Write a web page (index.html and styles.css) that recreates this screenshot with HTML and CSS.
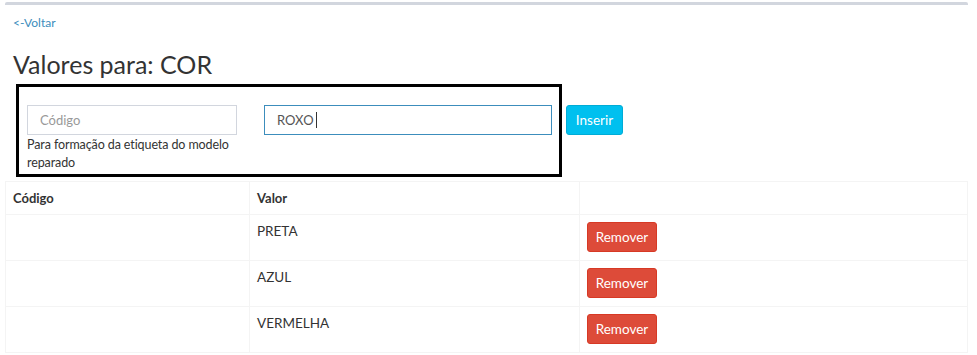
FILE: index.html
```html
<!DOCTYPE html>
<html lang="pt-BR">
<head>
    <meta charset="UTF-8">
    <title>Valores para: COR</title>
    <link rel="stylesheet" href="styles.css">
</head>
<body>
    <div class="box">
        <div class="box-body">
            <a href="#" class="back-link">&lt;-Voltar</a>
            <h2 class="page-title">Valores para: COR</h2>

            <div class="insert-row">
                <div class="insert-form">
                    <div class="field field-code">
                        <div class="form-control placeholder">Código</div>
                        <p class="help-text">Para formação da etiqueta do modelo reparado</p>
                    </div>
                    <div class="field field-value">
                        <div class="form-control focused">ROXO<span class="caret"></span></div>
                    </div>
                </div>
                <button class="btn btn-info">Inserir</button>
            </div>
        </div>

        <table class="values-table">
            <thead>
                <tr>
                    <th class="col-code">Código</th>
                    <th class="col-value">Valor</th>
                    <th></th>
                </tr>
            </thead>
            <tbody>
                <tr>
                    <td></td>
                    <td>PRETA</td>
                    <td><button class="btn btn-danger">Remover</button></td>
                </tr>
                <tr>
                    <td></td>
                    <td>AZUL</td>
                    <td><button class="btn btn-danger">Remover</button></td>
                </tr>
                <tr>
                    <td></td>
                    <td>VERMELHA</td>
                    <td><button class="btn btn-danger">Remover</button></td>
                </tr>
            </tbody>
        </table>
    </div>
</body>
</html>
```

FILE: styles.css
```css
body {
    font-family: Lato, "Noto Sans", sans-serif;
    font-size: 13px;
    color: #333;
    background-color: #fff;
    margin: 0;
    padding: 2px 9px 0 5px;
}

.box {
    border-top: 3px solid #d2d6de;
    border-radius: 2px 2px 0 0;
}

.box-body {
    padding: 11px 8px 4px 8px;
}

.back-link {
    display: block;
    font-size: 12px;
    color: #3c8dbc;
    text-decoration: none;
    line-height: 14px;
}

.page-title {
    font-size: 25px;
    font-weight: 400;
    color: #333;
    margin: 17px 0 3px 0;
    line-height: 34px;
}

.insert-row {
    display: flex;
    align-items: flex-start;
    gap: 4px;
}

.insert-form {
    display: flex;
    gap: 27px;
    width: 525px;
    margin-left: 3px;
    border: 3px solid #000;
    padding: 18px 7px 2px 8px;
}

.field-code {
    width: 210px;
}

.field-value {
    width: 288px;
}

.form-control {
    box-sizing: border-box;
    height: 30px;
    padding: 6px 12px;
    border: 1px solid #d2d6de;
    line-height: 16px;
    font-size: 13px;
    color: #555;
}

.form-control.placeholder {
    color: #999;
}

.form-control.focused {
    border-color: #3c8dbc;
}

.caret {
    display: inline-block;
    width: 1px;
    height: 16px;
    margin-left: 2px;
    vertical-align: top;
    background-color: #333;
}

.help-text {
    margin: 1px -20px 0 0;
    line-height: 18px;
    font-size: 12.5px;
    letter-spacing: -0.1px;
    color: #333;
}

.btn {
    font-family: inherit;
    font-size: 13.5px;
    height: 30px;
    padding: 0 12px;
    border-radius: 3px;
    color: #fff;
    cursor: pointer;
}

.btn-info {
    margin-top: 21px;
    width: 57px;
    background-color: #00c0ef;
    border: 1px solid #00acd6;
    padding: 0;
}

.btn-danger {
    display: block;
    width: 70px;
    padding: 0;
    background-color: #dd4b39;
    border: 1px solid #d73925;
}

.values-table {
    width: 100%;
    border-collapse: collapse;
    border: 1px solid #f4f4f4;
}

.values-table th,
.values-table td {
    border: 1px solid #f4f4f4;
    text-align: left;
    vertical-align: top;
}

.values-table th {
    font-weight: 700;
    padding: 8px 7px;
    line-height: 16px;
}

.values-table td {
    padding: 7px 7px 8px 7px;
    line-height: 18px;
    font-size: 13.5px;
}

.col-code {
    width: 229px;
}

.col-value {
    width: 315px;
}
```
